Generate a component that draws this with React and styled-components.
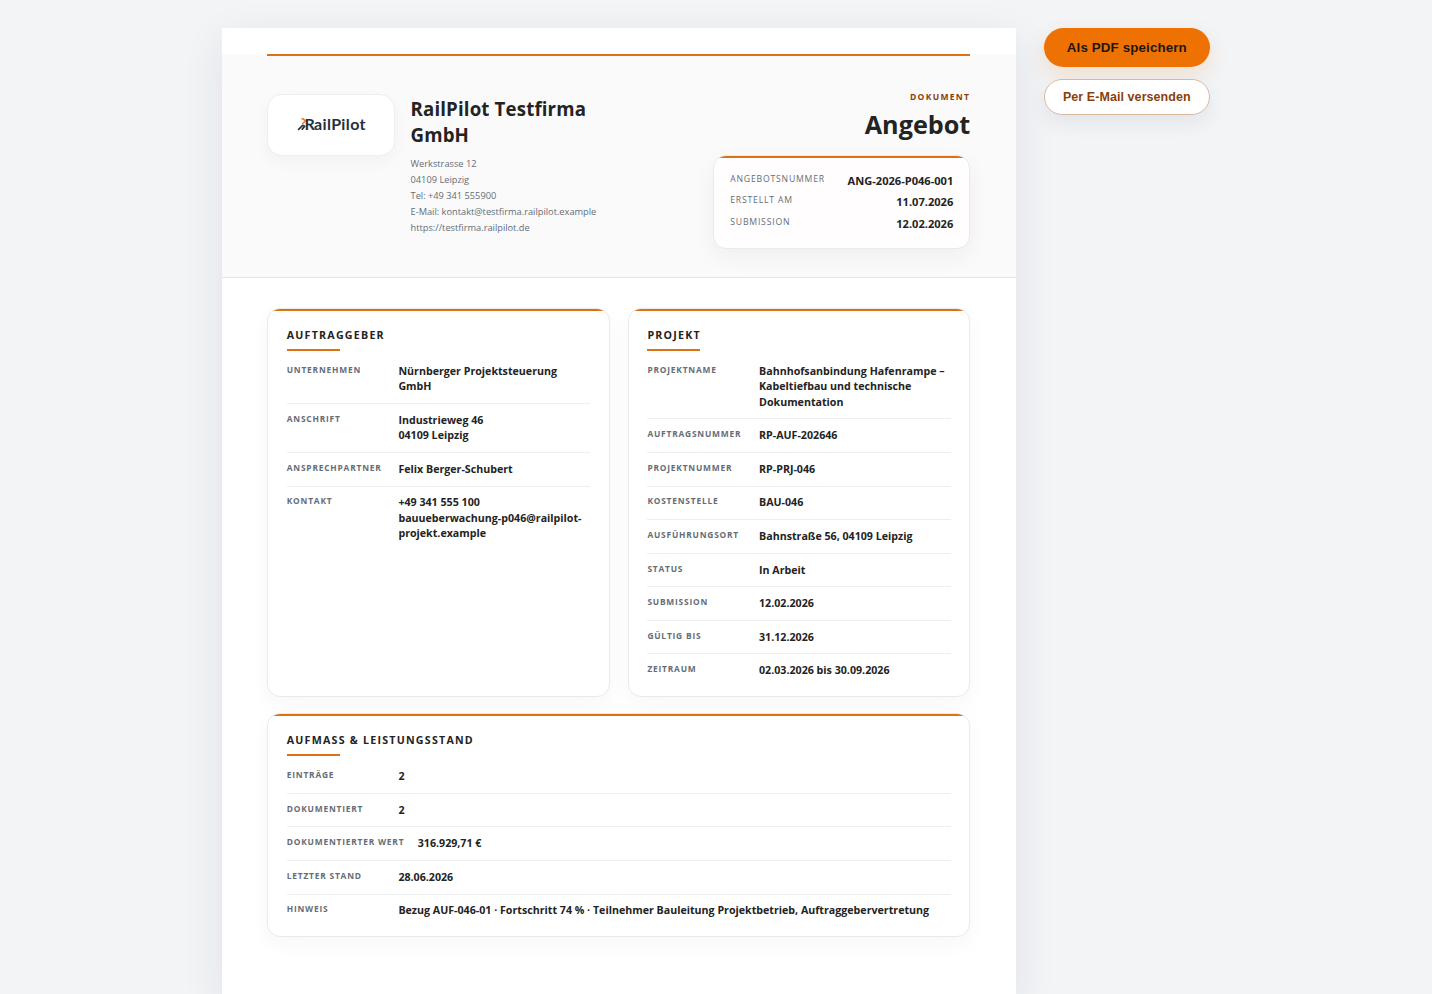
import React from "react";
import styled, { createGlobalStyle, css } from "styled-components";

const color = {
  accent: "#ee7203",
  line: "#dd7214",
  rust: "#8a3f0b",
  ink: "#232323",
  muted: "#656d77",
};

const GlobalStyle = createGlobalStyle`
  * { box-sizing: border-box; }
  body {
    margin: 0;
    background: #f2f4f6;
    color: ${color.ink};
    font-family: "Open Sans", "Noto Sans", sans-serif;
  }
`;

const Layout = styled.div`
  display: flex;
  justify-content: center;
  align-items: flex-start;
  gap: 28px;
  height: 994px;
  padding-top: 28px;
  overflow: hidden;
`;

const Sheet = styled.main`
  width: 210mm;
  height: 100%;
  padding-top: 26px;
  background: #fff;
  box-shadow: 0 12px 40px rgba(31, 45, 61, 0.09);
`;

const Header = styled.header`
  height: 224px;
  padding: 0 45.6px 0 45.2px;
  background: #fafafa;
  border-bottom: 1px solid #e3e6e8;
`;

const HeaderRule = styled.div`
  height: 2px;
  background: ${color.line};
`;

const HeaderRow = styled.div`
  display: flex;
  justify-content: space-between;
  padding-top: 32px;
`;

const Company = styled.div`
  display: flex;
  gap: 15.7px;
  padding-top: 6px;
`;

const LogoBox = styled.div`
  display: flex;
  align-items: center;
  justify-content: center;
  width: 127.5px;
  height: 62px;
  background: #fff;
  border: 1px solid #eceef0;
  border-radius: 15px;
  box-shadow: 0 6px 16px rgba(31, 45, 61, 0.04);
`;

const CompanyName = styled.h1`
  width: 205px;
  margin: 2px 0 8px;
  font-size: 14pt;
  line-height: 26px;
  letter-spacing: 0.15px;
`;

const Address = styled.div`
  color: ${color.muted};
  font-size: 9.25px;
  line-height: 16px;
`;

const Document = styled.div`
  width: 257px;
  text-align: right;
`;

const Kicker = styled.div`
  color: ${color.rust};
  font-size: 6.4pt;
  font-weight: 700;
  line-height: 18px;
  letter-spacing: 1.3px;
`;

const DocTitle = styled.h2`
  margin: 0 0 13px;
  font-size: 18.9pt;
  line-height: 36px;
`;

const topRule = css`
  position: relative;
  overflow: hidden;
  &::before {
    content: "";
    position: absolute;
    top: 0;
    left: -1px;
    right: -1px;
    height: 2px;
    background: ${color.line};
  }
`;

const Meta = styled.dl`
  ${topRule}
  height: 94px;
  margin: 0;
  padding: 14px 16px;
  background: #fffdfe;
  border: 1px solid #e8ebee;
  border-radius: 13px;
  box-shadow: 0 8px 22px rgba(31, 45, 61, 0.05);
`;

const MetaRow = styled.div`
  display: flex;
  justify-content: space-between;
  height: 21.4px;

  dt {
    color: ${color.muted};
    font-size: 6.5pt;
    line-height: 19px;
    letter-spacing: 0.8px;
  }
  dd {
    margin: 0;
    font-size: 8.32pt;
    font-weight: 700;
    line-height: 21px;
  }
`;

const Cards = styled.div`
  display: grid;
  grid-template-columns: 1fr 1fr;
  gap: 16.8px 18.4px;
  padding: 30px 45.6px 0 45.2px;
`;

const Card = styled.section`
  ${topRule}
  grid-column: ${props => (props.$wide ? "1 / -1" : "auto")};
  padding: 18.5px 18.4px 16.8px;
  background: #fff;
  border: 1px solid #e8eaed;
  border-radius: 13px;
  box-shadow: 0 7px 20px rgba(31, 45, 61, 0.04);
`;

const CardTitle = styled.h3`
  margin: 0 0 13.2px;
  font-size: 8pt;
  line-height: 15px;
  letter-spacing: 1.23px;
  text-transform: uppercase;

  &::after {
    content: "";
    display: block;
    width: 14mm;
    height: 2px;
    margin-top: 6px;
    background: ${color.line};
  }
`;

const List = styled.dl`
  margin: 0;
`;

const Row = styled.div`
  display: flex;
  gap: 13.4px;
  padding: 8.8px 0 8.32px;
  border-bottom: 1px solid #eceef0;

  &:first-child { padding-top: 0; }
  &:last-child { padding-bottom: 0; border-bottom: 0; }
`;

const Label = styled.dt`
  flex: none;
  min-width: 26mm;
  color: ${color.muted};
  font-size: 6.3pt;
  font-weight: 700;
  line-height: 12.7px;
  letter-spacing: 0.8px;
  text-transform: uppercase;
`;

const Value = styled.dd`
  min-width: 0;
  margin: 0;
  font-size: 8pt;
  font-weight: 700;
  line-height: 1.45;
  white-space: pre-line;
`;

const Actions = styled.aside`
  display: flex;
  flex-direction: column;
  gap: 12px;
  width: 166px;
`;

const Button = styled.button`
  height: 36px;
  padding: 0;
  border: 1px solid #d9b9a0;
  border-radius: 999px;
  background: #fff;
  color: ${color.rust};
  font: 700 12.5px "Liberation Sans", Arial, sans-serif;
  letter-spacing: 0.07px;
  box-shadow: 0 8px 20px rgba(31, 45, 61, 0.07);

  ${props => props.$primary && css`
    height: 39px;
    border: 0;
    background: ${color.accent};
    color: #221712;
    font-size: 13.33px;
    letter-spacing: 0.13px;
    box-shadow: 0 8px 20px rgba(238, 114, 3, 0.16);
  `}
`;

const client = [
  ["Unternehmen", "Nürnberger Projektsteuerung GmbH"],
  ["Anschrift", "Industrieweg 46\n04109 Leipzig"],
  ["Ansprechpartner", "Felix Berger-Schubert"],
  ["Kontakt", "+49 341 555 100\nbauueberwachung-p046@railpilot-projekt.example"],
];

const project = [
  ["Projektname", "Bahnhofsanbindung Hafenrampe – Kabeltiefbau und technische Dokumentation"],
  ["Auftragsnummer", "RP-AUF-202646"],
  ["Projektnummer", "RP-PRJ-046"],
  ["Kostenstelle", "BAU-046"],
  ["Ausführungsort", "Bahnstraße 56, 04109 Leipzig"],
  ["Status", "In Arbeit"],
  ["Submission", "12.02.2026"],
  ["Gültig bis", "31.12.2026"],
  ["Zeitraum", "02.03.2026 bis 30.09.2026"],
];

const progress = [
  ["Einträge", "2"],
  ["Dokumentiert", "2"],
  ["Dokumentierter Wert", "316.929,71 €"],
  ["Letzter Stand", "28.06.2026"],
  ["Hinweis", "Bezug AUF-046-01 · Fortschritt 74 % · Teilnehmer Bauleitung Projektbetrieb, Auftraggebervertretung"],
];

const meta = [
  ["ANGEBOTSNUMMER", "ANG-2026-P046-001"],
  ["ERSTELLT AM", "11.07.2026"],
  ["SUBMISSION", "12.02.2026"],
];

const LogoText = styled.text`
  fill: #24303a;
  font: 700 16px Lato, sans-serif;
`;

const Logo = () => (
  <svg width="74" height="26" viewBox="-3 -4 74 26">
    <path d="M1 13.8 C3 12.6 4 10 6.6 9 M4.8 13.8 L8 9.6" stroke="#24303a" strokeWidth="1.8" fill="none" />
    <path d="M4.6 2.8 H6.2 L8.4 5 L5.2 8" stroke="#ee7d32" strokeWidth="1.7" fill="none" />
    <LogoText x="7.6" y="13.8">R</LogoText>
    <LogoText x="17" y="13.8" textLength="51.5">ailPilot</LogoText>
  </svg>
);

const InfoCard = ({ title, rows, wide }) => (
  <Card $wide={wide}>
    <CardTitle>{title}</CardTitle>
    <List>
      {rows.map(([label, value]) => (
        <Row key={label}>
          <Label>{label}</Label>
          <Value>{value}</Value>
        </Row>
      ))}
    </List>
  </Card>
);

const App = () => (
  <>
    <GlobalStyle />
    <Layout>
      <Sheet>
        <Header>
          <HeaderRule />
          <HeaderRow>
            <Company>
              <LogoBox>
                <Logo />
              </LogoBox>
              <div>
                <CompanyName>RailPilot Testfirma GmbH</CompanyName>
                <Address>
                  <div>Werkstrasse 12</div>
                  <div>04109 Leipzig</div>
                  <div>Tel: +49 341 555900</div>
                  <div>E-Mail: kontakt@testfirma.railpilot.example</div>
                  <div>https://testfirma.railpilot.de</div>
                </Address>
              </div>
            </Company>
            <Document>
              <Kicker>DOKUMENT</Kicker>
              <DocTitle>Angebot</DocTitle>
              <Meta>
                {meta.map(([label, value]) => (
                  <MetaRow key={label}>
                    <dt>{label}</dt>
                    <dd>{value}</dd>
                  </MetaRow>
                ))}
              </Meta>
            </Document>
          </HeaderRow>
        </Header>
        <Cards>
          <InfoCard title="Auftraggeber" rows={client} />
          <InfoCard title="Projekt" rows={project} />
          <InfoCard title="Aufmass & Leistungsstand" rows={progress} wide />
        </Cards>
      </Sheet>
      <Actions>
        <Button $primary>Als PDF speichern</Button>
        <Button>Per E-Mail versenden</Button>
      </Actions>
    </Layout>
  </>
);

export default App;
